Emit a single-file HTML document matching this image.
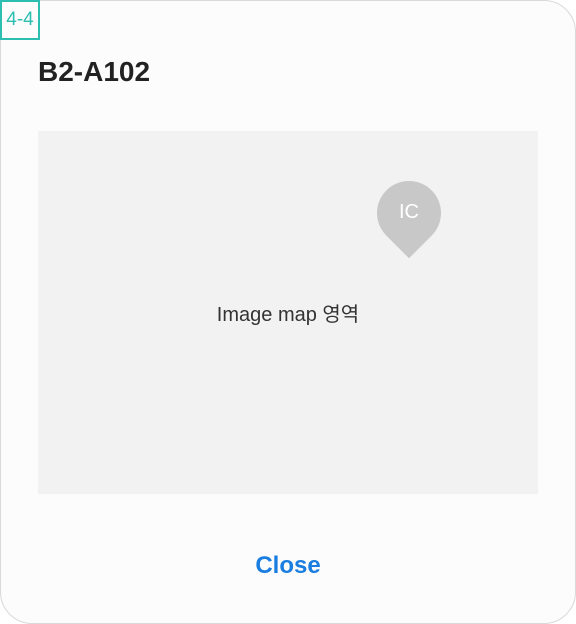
<!DOCTYPE html>
<html><head><meta charset="utf-8"><style>
html,body{margin:0;padding:0;width:576px;height:624px;overflow:hidden;background:#fff;font-family:"Liberation Sans","Noto Sans CJK KR",sans-serif}
.card{position:absolute;left:0;top:0;width:574px;height:622px;border:1px solid #d9d9d9;border-radius:0 32px 32px 32px;background:#fcfcfc}
.badge{position:absolute;left:0;top:0;width:36px;height:36px;border:2px solid #2cbfb1;color:#2cbfb1;font-size:19px;line-height:36px;text-align:center}
.title{position:absolute;left:38px;top:56px;font-size:28px;font-weight:bold;color:#222}
.map{position:absolute;left:38px;top:131px;width:500px;height:363px;background:#f2f2f2}
.map .t{position:absolute;left:0;right:0;top:167px;text-align:center;font-size:20px;color:#333}
.pin{position:absolute;left:339px;top:50px;width:64px;height:64px;background:#c8c8c8;border-radius:50% 50% 0 50%;transform:rotate(45deg)}
.ic{position:absolute;left:339px;top:70px;width:64px;text-align:center;color:#fff;font-size:20px}
.close{position:absolute;left:0;right:0;top:552px;text-align:center;font-size:24px;font-weight:bold;color:#1a7de0}
</style></head><body>
<div class="card"></div>
<div class="badge">4-4</div>
<div class="title">B2-A102</div>
<div class="map"><div class="pin"></div><div class="ic">IC</div><div class="t">Image map 영역</div></div>
<div class="close">Close</div>
</body></html>
